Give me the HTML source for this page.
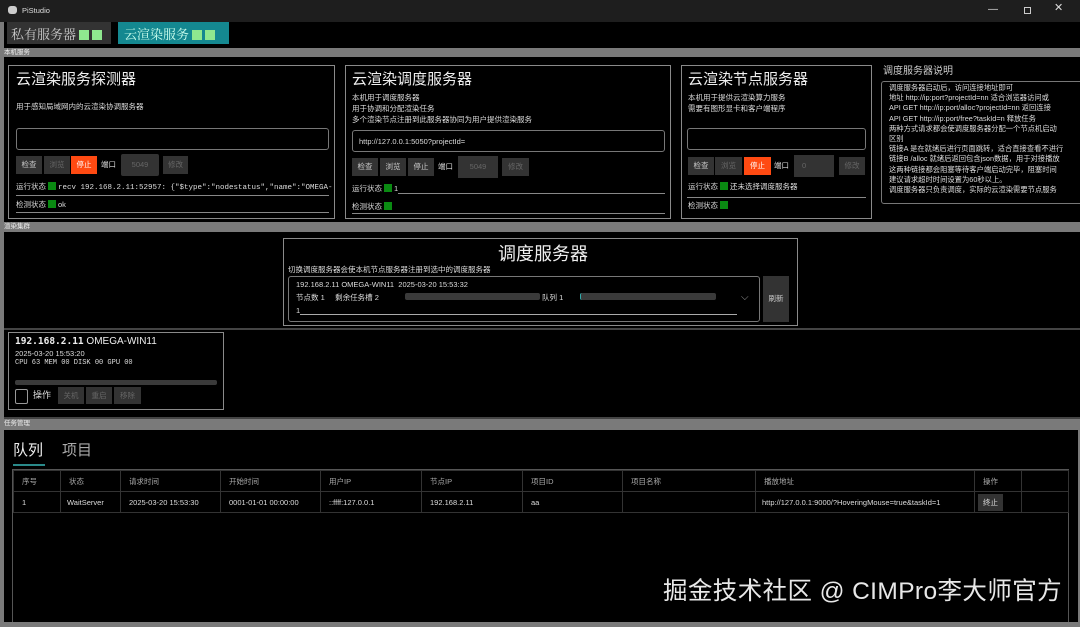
<!DOCTYPE html>
<html><head><meta charset="utf-8"><style>
*{box-sizing:border-box;margin:0;padding:0}
body{width:1080px;height:627px;background:#7a7a7a;font-family:"Liberation Sans","Noto Sans CJK SC",sans-serif;color:#ddd;position:relative;overflow:hidden;font-size:8px}
.a{position:absolute}
.blk{background:#000}
.pan{position:absolute;border:1px solid #8a8a8a;background:#000}
.h{font-size:15px;color:#eee;position:absolute}
.t{font-size:7.5px;color:#ddd;position:absolute;line-height:11px;white-space:nowrap}
.inp{position:absolute;border:1px solid #777;border-radius:3px;height:22px;background:#000;font-size:7.5px;color:#ddd;padding:6px 6px}
.btn{position:absolute;height:18px;background:#333;color:#ccc;font-size:7.5px;text-align:center;line-height:18px}
.dis{color:#666}
.stop{background:#ff4a12;color:#fff}
.g{display:inline-block;width:8px;height:8px;background:#0a8a12;vertical-align:-1px;margin:0 2px}
.lg{display:inline-block;width:10px;height:10px;background:#8fe88f;margin-left:3px;vertical-align:-1px}
.line{position:absolute;height:1px;background:#888}
.band{position:absolute;left:0;width:1080px;background:#7a7a7a;font-size:6.5px;color:#eee;line-height:10px;padding-left:4px}
table{border-collapse:collapse;font-size:7.5px;color:#ddd;table-layout:fixed}
td{border:1px solid #333;padding:0 8px;height:21px;white-space:nowrap;overflow:hidden}
</style></head><body>
<div class="a" style="left:0;top:0;width:1080px;height:22px;background:#1e1e1e"></div>
<div class="a" style="left:8px;top:6px;width:9px;height:8px;background:#ccc;border-radius:3px"></div>
<div class="t" style="left:22px;top:5px;color:#ddd;font-size:7.5px">PiStudio</div>
<div class="t" style="left:988px;top:4px;font-size:10px">—</div>
<div class="a" style="left:1024px;top:7px;width:7px;height:7px;border:1px solid #ccc"></div>
<div class="t" style="left:1054px;top:3px;font-size:11px">✕</div>
<div class="a blk" style="left:4px;top:22px;width:1076px;height:26px"></div>
<div class="a" style="left:7px;top:22px;width:104px;height:22px;background:#333;font-size:13px;color:#ccc;padding:2px 4px;font-family:'Noto Serif CJK SC',serif;white-space:nowrap">私有服务器<span class="lg"></span><span class="lg"></span></div>
<div class="a" style="left:118px;top:22px;width:111px;height:22px;background:#148890;font-size:13px;color:#cfe;padding:2px 6px;font-family:'Noto Serif CJK SC',serif;white-space:nowrap">云渲染服务<span class="lg"></span><span class="lg"></span></div>
<div class="band" style="top:48px;height:9px">本机服务</div>
<div class="a blk" style="left:4px;top:57px;width:1076px;height:165px"></div>

<div class="pan" style="left:8px;top:65px;width:327px;height:154px"></div>
<div class="h" style="left:16px;top:68px">云渲染服务探测器</div>
<div class="t" style="left:16px;top:101px">用于感知局域网内的云渲染协调服务器</div>
<div class="inp" style="left:16px;top:128px;width:313px"></div>
<div class="btn" style="left:16px;top:156px;width:26px">检查</div>
<div class="btn dis" style="left:44px;top:156px;width:26px">浏览</div>
<div class="btn stop" style="left:71px;top:156px;width:26px">停止</div>
<div class="t" style="left:101px;top:159px">端口</div>
<div class="btn dis" style="left:121px;top:154px;width:38px;height:22px;line-height:22px;border-radius:2px">5049</div>
<div class="btn dis" style="left:163px;top:156px;width:25px">修改</div>
<div class="t" style="left:16px;top:181px">运行状态<span class="g"></span><span style="font-family:'Liberation Mono',monospace">recv 192.168.2.11:52957: {"$type":"nodestatus","name":"OMEGA-</span></div>
<div class="line" style="left:16px;top:195px;width:313px"></div>
<div class="t" style="left:16px;top:199px">检测状态<span class="g"></span>ok</div>
<div class="line" style="left:16px;top:212px;width:313px"></div>

<div class="pan" style="left:345px;top:65px;width:326px;height:154px"></div>
<div class="h" style="left:352px;top:68px">云渲染调度服务器</div>
<div class="t" style="left:352px;top:92px">本机用于调度服务器<br>用于协调和分配渲染任务<br>多个渲染节点注册到此服务器协同为用户提供渲染服务</div>
<div class="inp" style="left:352px;top:130px;width:313px">http://127.0.0.1:5050?projectId=</div>
<div class="btn" style="left:352px;top:158px;width:26px">检查</div>
<div class="btn" style="left:380px;top:158px;width:26px">浏览</div>
<div class="btn" style="left:408px;top:158px;width:26px">停止</div>
<div class="t" style="left:438px;top:161px">端口</div>
<div class="btn dis" style="left:458px;top:156px;width:40px;height:22px;line-height:22px">5049</div>
<div class="btn dis" style="left:502px;top:158px;width:27px">修改</div>
<div class="t" style="left:352px;top:183px">运行状态<span class="g"></span>1</div>
<div class="line" style="left:398px;top:193px;width:267px"></div>
<div class="t" style="left:352px;top:201px">检测状态<span class="g"></span></div>
<div class="line" style="left:352px;top:213px;width:313px"></div>

<div class="pan" style="left:681px;top:65px;width:191px;height:154px"></div>
<div class="h" style="left:688px;top:68px">云渲染节点服务器</div>
<div class="t" style="left:688px;top:92px">本机用于提供云渲染算力服务<br>需要有图形显卡和客户端程序</div>
<div class="inp" style="left:687px;top:128px;width:179px"></div>
<div class="btn" style="left:688px;top:157px;width:26px">检查</div>
<div class="btn dis" style="left:715px;top:157px;width:27px">浏览</div>
<div class="btn stop" style="left:744px;top:157px;width:27px">停止</div>
<div class="t" style="left:774px;top:160px">端口</div>
<div class="btn dis" style="left:794px;top:155px;width:40px;height:22px;line-height:22px;text-align:left;padding-left:8px">0</div>
<div class="btn dis" style="left:839px;top:157px;width:26px">修改</div>
<div class="t" style="left:688px;top:181px">运行状态<span class="g"></span>还未选择调度服务器</div>
<div class="line" style="left:687px;top:197px;width:179px"></div>
<div class="t" style="left:688px;top:200px">检测状态<span class="g"></span></div>

<div class="t" style="left:883px;top:66px;font-size:10px;color:#ccc">调度服务器说明</div>
<div class="a" style="left:881px;top:81px;width:210px;height:123px;border:1px solid #777;border-radius:3px;overflow:hidden;padding:1px 7px"><div style="font-size:7.3px;line-height:10.2px;white-space:nowrap;color:#ddd">调度服务器启动后，访问连接地址即可<br>地址 http://ip:port?projectId=nn 适合浏览器访问或<br>API GET http://ip:port/alloc?projectId=nn 返回连接<br>API GET http://ip:port/free?taskId=n 释放任务<br>两种方式请求都会使调度服务器分配一个节点机启动<br>区别<br>链接A 是在就绪后进行页面跳转，适合直接查看不进行<br>链接B /alloc 就绪后返回包含json数据，用于对接播放<br>这两种链接都会阻塞等待客户端启动完毕，阻塞时间<br>建议请求超时时间设置为60秒以上。<br>调度服务器只负责调度，实际的云渲染需要节点服务</div></div>

<div class="band" style="top:222px;height:10px">渲染集群</div>
<div class="a blk" style="left:4px;top:232px;width:1076px;height:96px"></div>
<div class="pan" style="left:283px;top:238px;width:515px;height:88px"></div>
<div class="h" style="left:498px;top:240px;font-size:18px">调度服务器</div>
<div class="t" style="left:288px;top:264px">切换调度服务器会使本机节点服务器注册到选中的调度服务器</div>
<div class="a" style="left:288px;top:276px;width:472px;height:46px;border:1px solid #777;border-radius:3px"></div>
<div class="t" style="left:296px;top:279px">192.168.2.11 OMEGA-WIN11&nbsp;&nbsp;2025-03-20 15:53:32</div>
<div class="t" style="left:296px;top:292px">节点数 1&nbsp;&nbsp;&nbsp;&nbsp;&nbsp;剩余任务槽 2</div>
<div class="a" style="left:405px;top:293px;width:135px;height:7px;background:#3a3a3a;border-radius:2px"></div>
<div class="t" style="left:542px;top:292px">队列 1</div>
<div class="a" style="left:580px;top:293px;width:136px;height:7px;background:#3a3a3a;border-radius:2px;border-left:1px solid #3aa"></div>
<div class="t" style="left:741px;top:292px;font-size:10px;color:#999">⌵</div>
<div class="t" style="left:296px;top:305px">1</div>
<div class="line" style="left:300px;top:314px;width:437px;background:#aaa"></div>
<div class="btn" style="left:763px;top:276px;width:26px;height:46px;line-height:46px">刷新</div>

<div class="a" style="left:4px;top:328px;width:1076px;height:2px;background:#444"></div>
<div class="a blk" style="left:4px;top:330px;width:1076px;height:87px"></div>
<div class="pan" style="left:8px;top:332px;width:216px;height:78px"></div>
<div class="t" style="left:15px;top:336px;font-size:10px;color:#eee"><span style="font-family:'DejaVu Sans Mono',monospace;font-size:9.5px;font-weight:bold">192.168.2.11</span> OMEGA-WIN11</div>
<div class="t" style="left:15px;top:348px">2025-03-20 15:53:20</div>
<div class="t" style="left:15px;top:358px;font-family:'Liberation Mono',monospace;font-size:7px">CPU 63 MEM 00 DISK 00 GPU 00</div>
<div class="a" style="left:15px;top:380px;width:202px;height:5px;background:#3a3a3a;border-radius:2px"></div>
<div class="a" style="left:15px;top:389px;width:13px;height:15px;border:1px solid #999;border-radius:2px"></div>
<div class="t" style="left:33px;top:390px;font-size:9px">操作</div>
<div class="btn dis" style="left:58px;top:387px;width:26px;height:17px">关机</div>
<div class="btn dis" style="left:86px;top:387px;width:26px;height:17px">重启</div>
<div class="btn dis" style="left:114px;top:387px;width:27px;height:17px">移除</div>
<div class="a" style="left:4px;top:417px;width:1076px;height:2px;background:#444"></div>

<div class="band" style="top:419px;height:11px">任务管理</div>
<div class="a blk" style="left:4px;top:430px;width:1074px;height:192px"></div>
<div class="t" style="left:13px;top:442px;font-size:15px;line-height:18px;color:#eee">队列</div>
<div class="t" style="left:62px;top:442px;font-size:15px;line-height:18px;color:#aaa">项目</div>
<div class="a" style="left:13px;top:464px;width:32px;height:2px;background:#2a8a8a"></div>
<div class="a" style="left:12px;top:469px;width:1057px;height:153px;border:1px solid #555;border-bottom:none"></div>
<table class="a" style="left:13px;top:470px;width:1055px">
<colgroup><col style="width:47px"><col style="width:60px"><col style="width:100px"><col style="width:100px"><col style="width:101px"><col style="width:101px"><col style="width:100px"><col style="width:133px"><col style="width:219px"><col style="width:47px"><col style="width:47px"></colgroup>
<tr style="color:#aaa"><td>序号</td><td>状态</td><td>请求时间</td><td>开始时间</td><td>用户IP</td><td>节点IP</td><td>项目ID</td><td>项目名称</td><td>播放地址</td><td>操作</td><td></td></tr>
<tr><td>1</td><td style="padding:0 6px">WaitServer</td><td>2025-03-20 15:53:30</td><td>0001-01-01 00:00:00</td><td>::ffff:127.0.0.1</td><td>192.168.2.11</td><td>aa</td><td></td><td style="padding:0 6px">http://127.0.0.1:9000/?HoveringMouse=true&amp;taskId=1</td><td style="padding:0 3px"><span style="display:inline-block;background:#333;padding:3px 5px">终止</span></td><td></td></tr>
</table>
<div class="t" style="left:663px;top:576px;font-size:24.5px;line-height:32px;color:#e8e8e8;letter-spacing:0.4px">掘金技术社区 @ CIMPro李大师官方</div>
</body></html>
